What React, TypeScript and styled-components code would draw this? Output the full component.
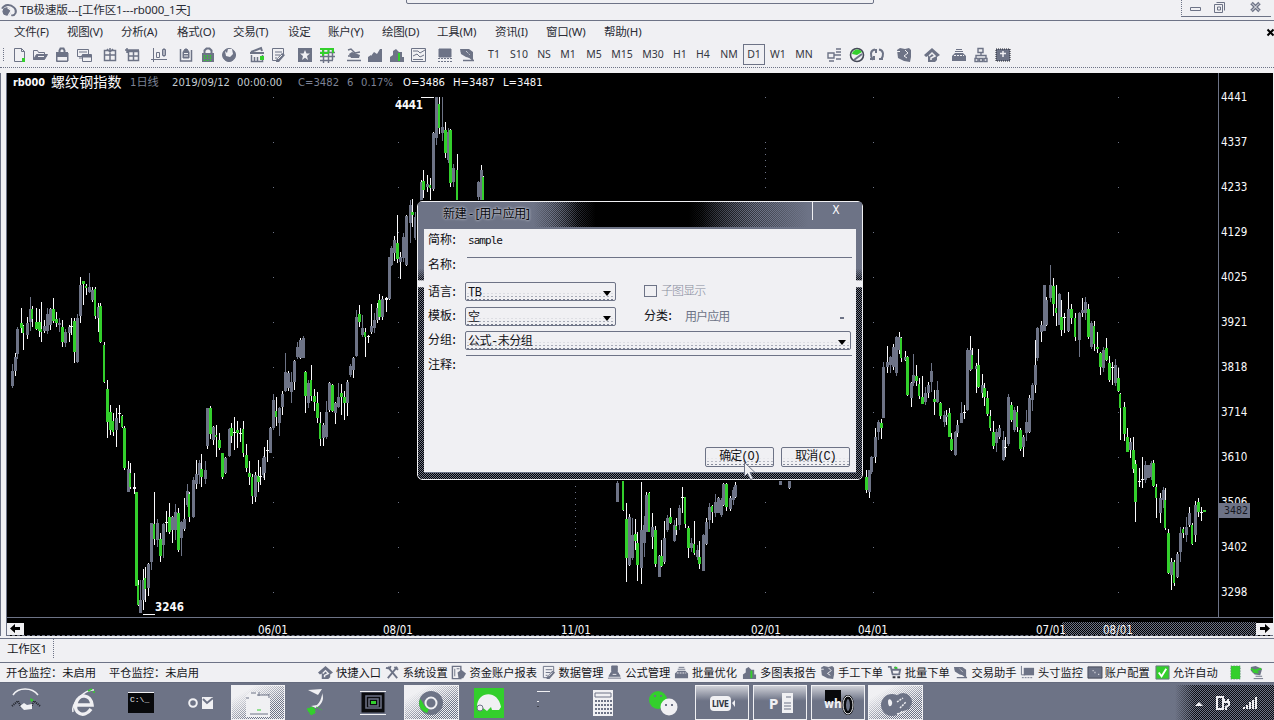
import React from "react";
import styled, { createGlobalStyle, css } from "styled-components";

const paper = "#f0f0f3";
const slate = "#6d7386";
const green = "#33cf2c";
const white = "#fafafc";
const ui = `"Noto Sans", "Noto Sans CJK SC", sans-serif`;
const cond = `"DejaVu Sans Condensed", "DejaVu Sans", "Noto Sans CJK SC", sans-serif`;
const checker = (c: string) =>
  `repeating-conic-gradient(${c} 0 25%, transparent 0 50%) 0 0 / 2px 2px`;

const Global = createGlobalStyle`
  *{box-sizing:border-box}
  body{margin:0;background:${paper};overflow:hidden}
`;
const Page = styled.div`
  position: relative; width: 1274px; height: 720px; display: flex; flex-direction: column;
  background: ${paper}; color: #16171c; font: 12px/16px ${ui}; white-space: nowrap; overflow: hidden;
`;

/* ---------- title and menu ---------- */
const TitleBar = styled.header`
  height: 21px; flex: none; display: flex; align-items: center; border-bottom: 1px solid ${slate};
  padding-left: 1px; gap: 4px;
`;
const TitleText = styled.span`font-size: 11.5px; letter-spacing: -0.14px; flex: 1; color: #2a2c35; padding-bottom: 1px;`;
const TitleNotch = styled.div`
  position: absolute; left: 406px; top: -3px; width: 468px; height: 7px;
  border: 1px solid ${slate}; border-radius: 2px;
`;
const WindowButtons = styled.div`
  width: 90px; height: 17px; align-self: flex-start; display: flex; align-items: center;
  border-bottom: 1px solid ${slate}; border-left: 1px dotted ${slate}; margin-right: 3px;
`;
const MenuBar = styled.nav`height: 22px; flex: none; display: flex; align-items: center; padding-left: 14px; color: #2a2c35;`;
const MenuItem = styled.span<{ $w: number }>`width: ${(p) => p.$w}px; font-size: 11.5px; letter-spacing: -0.2px; flex: none;`;

/* ---------- toolbar ---------- */
const ToolBar = styled.div`
  height: 25px; flex: none; display: flex; align-items: center; padding: 0 0 1px 3px;
  border-bottom: 1px dotted ${slate};
`;
const Grip = styled.i`width: 1px; height: 13px; border-left: 1px dotted ${slate};`;
const Tool = styled.span<{ $gap: number; $w: number; $on?: boolean }>`
  margin-left: ${(p) => p.$gap}px; width: ${(p) => p.$w}px; height: 21px; flex: none;
  display: flex; align-items: center; justify-content: center;
  font: 10.5px/19px ${ui}; color: #343742;
  ${(p) => p.$on && css`border: 1px solid ${slate};`}
`;

const iconArt: Record<string, React.ReactNode> = {
  doc: <><path d="M3.5 1.5h7l3 3v10h-10z" /><path d="M10.500 1.500v3h3" /><path d="M11 11h3v4h-3z" fill={green} stroke="none" /></>,
  folder: <><path d="M1.500 12.500v-9h4l1 2h6v2" /><path d="M1.500 12.500l3-5h11l-3 5z" fill={slate} /><path d="M6 9.500h6" stroke={paper} /></>,
  lock: <><path d="M5.500 6V3.500l1-2h3l1 2V6" strokeWidth="2" /><path d="M3 6h11v8H3z" fill={paper} /><path d="M2.500 5v9.500h11V5" /><path d="M3 5h11v5H3z" fill={slate} stroke="none" /></>,
  windows: <><path d="M1.500 2.500h11v7h-11z" /><path d="M6.500 7.500h9v7h-9z" fill={paper} /><path d="M6 8h9v2H6zM3 11h4M3 5h8" fill={slate} /></>,
  table: <><path d="M2.500 3.500h11v10h-11zM8 1v13M2.500 8h11M5 2l3 3 3-3" strokeWidth="1.500" /></>,
  tableT: <><path d="M4.500 4.500h10v9h-10zM9.500 3v11M4.500 9h10M1 3h14M3 1v5" strokeWidth="1.500" /></>,
  candles: <><path d="M2.500 1v14M0 12.500h16" /><path d="M5.500 5.500h3v5h-3zM11.500 2.500h3v6h-3zM13 1v9" /></>,
  bag: <><path d="M2.500 2v12h11V3" strokeWidth="1.500" /><path d="M5 11V5l2-3h2l2 3v6z" fill={slate} /><path d="M6 6.500h4M6 9h4" stroke={paper} /></>,
  report: <><path d="M1.500 1.500h9v13h-9z" strokeWidth="1.500" /><path d="M4 4v8M6 4h3" /><path d="M7 8l4-3 5 4-3 5H8z" fill={slate} stroke="none" /></>,
  greenLock: <><path d="M4.500 6V3.500l2-2h3l2 2V6" strokeWidth="2" /><path d="M2 6h12v9H2z" fill={slate} stroke="none" /><path d="M4.500 8v6M7.500 8v6M10.500 8v6" stroke={green} strokeWidth="1.500" strokeDasharray="1.500 1" /></>,
  ring: <><path d="M8 1.500a6.500 6.500 0 1 0 .1 0z" fill={slate} /><path d="M4 4l2 2 1-4 4 0 1 5-3 3-4-1z" fill={paper} stroke="none" /></>,
  clap: <><path d="M2 5l10-4 1 3M1 6h14" strokeWidth="2" /><path d="M2.500 8v6.500h11V8M5.500 10v5M8.500 10v5" strokeWidth="1.500" /><path d="M11 9h4v4h-4z" fill={green} stroke="none" /></>,
  note: <><path d="M2.500 1.500h11v6M2.500 1.500v12h6M5 5h7M5 8h5M5 11h2" /><path d="M6 13l6-7 3 2-6 7H6z" fill={slate} stroke="none" /><path d="M8 12l4-4" stroke={paper} /></>,
  star: <><path d="M1 1h14v14H1z" fill={slate} stroke="none" /><path d="M8 3l1.500 3.500H13L10 9l1 4-3-2.200L5 13l1-4-3-2.500h3.500z" fill={paper} stroke="none" /></>,
  grid: <><path d="M1 5.500h15M1 9.500h15M1 13.500h13M4.500 2v14M9.500 2v14M13.500 2v11" strokeWidth="1.500" /><path d="M4 1v8M9.500 1v5M14 1v5M1 2h14M1 6h9" stroke={green} strokeWidth="2" /></>,
  hand: <><path d="M2 3l3-1 4 4 5-1M2 9h11M1 13.500h14" strokeWidth="1.500" /><path d="M3 7l3-2 8 3-1 3H5z" fill={slate} stroke="none" /></>,
  bars: <path d="M1 15V10l3-2v1l3-4 3 2 3-5h2v13z" fill={slate} stroke="none" />,
  barsG: <><path d="M1 15v-5l3-2V4l3-2 3 3h3v5h2v5z" fill={slate} stroke="none" /><path d="M9 6h2v8H9z" fill={green} stroke="none" /></>,
  sheet: <><path d="M1.500 1.500h14v13h-14z" /><path d="M3 4h5l2 2 5-3M3 9l4-2 3 3 4-2M3 12.500h10" /></>,
  screen: <><path d="M2 2h12v8H2z" fill={slate} /><path d="M1 11.500h14M1 14.500h14" strokeDasharray="2 1" /></>,
  chartBox: <><path d="M1 2h9l4 3v8l-3-2-4-1-5-3z" fill={slate} stroke="none" /><path d="M2 4l12 9M4 13.500h11" strokeWidth="1.500" /><path d="M7 4l4 4" stroke={paper} strokeDasharray="1 1" /></>,
  boxes: <><path d="M2 6h6v5H2zM3 14h5M10 2h5M10 5h5M10 8h5M10 12h5M8 8h3" strokeWidth="1.400" /></>,
  gauge: <><circle cx="8" cy="8" r="6.500" strokeWidth="1.600" stroke="#454957" /><path d="M3 7c1-5 7-6 10-2l-5 3z" fill={green} stroke="none" /><path d="M5 13l8-6" strokeWidth="2" /></>,
  cycle: <path d="M6 2.500C1 3 1 9 4 13M10 2.500c5 1 5 6 2 10M1 12h4V9M7 2v4M10 12h4" strokeWidth="2" />,
  db: <><path d="M1 3l3-2 5 1 4-1 2 2v7l-1 5-6-1-6-3z" fill={slate} stroke="none" /><path d="M9 3l3 3-4 3 3 2M1 4.500h3" stroke={paper} /></>,
  home: <><path d="M8 1l8 7-3 2v3l-2 2H4V9l-2 1-2-2z" fill={slate} stroke="none" /><path d="M5 9l3-3 3 3-4 2v2" stroke={paper} strokeWidth="1.500" /></>,
  car: <><path d="M1 14V9l3-3h8l3 3v5z" fill={slate} stroke="none" /><path d="M4 4.500h8M5 2.500h6" /><path d="M3 8.500h10" stroke={paper} strokeDasharray="2 1" /></>,
  tree: <><path d="M5 1.500h5v4H5zM8 6v3M3 11V8.500h10V11M2 11.500h3v3H2zM6.500 11.500h3v3h-3zM11 11.500h3v3h-3z" strokeWidth="1.400" /></>,
  shot: <><path d="M1 2h14v12H1z" fill={slate} stroke="#20222a" strokeDasharray="1 1" /><path d="M8 4v6M5 6.500h6" stroke={paper} strokeWidth="1.500" /></>,
  account: <><path d="M1 2h15v12H1z" fill={slate} stroke="#454957" /><path d="M6 6h1M8 8h1M12 10h1" stroke={paper} strokeWidth="1.500" /></>,
  tools: <path d="M3 2l10 12M13 2L3 14M1 3l4 1 1-3M10 2l4 3" strokeWidth="2" />,
  cart: <><path d="M1 2h3l2 8h7l1-5H5M8 2l3 3" strokeWidth="2" /><path d="M6 13h3M11 13h3" strokeWidth="2" stroke="#30333d" /><path d="M8 2h3v2H8z" fill={green} stroke="none" /></>,
  lab: <><path d="M5 1h6v6l3 5H2l3-5zM1 14h14" fill={slate} /><path d="M6 10h4" stroke={paper} /></>,
  monitor: <><path d="M1.500 1v9.500h4" /><path d="M4 3h11v8H4z" fill={slate} stroke="none" /><path d="M2 13.500h11" strokeDasharray="2 1" /></>,
  check: <><path d="M1 1h14v14H1z" fill={green} stroke={slate} /><path d="M4 8l3 4 5-8" stroke="#fff" strokeWidth="2" /></>,
  block: <path d="M3 1h10v14H3z" fill={green} stroke={slate} strokeDasharray="1 2" />,
  net: <><path d="M2 2l5-1 7 3-2 7-6-1-4-4z" fill={slate} stroke="none" /><path d="M2 4l4 2 7-2M4 7l6 1" stroke={green} strokeWidth="2" /><path d="M5 14.500h10M7 12h7" /></>,
  orbit: <><path d="M1 6c3-5 9-5 13-1s1 9-3 8" strokeWidth="2" /><circle cx="6" cy="9" r="4" fill={slate} /><path d="M7 5l4 3-3 5" stroke={paper} strokeWidth="1.500" /></>,
};
const Svg = styled.svg`display: block; flex: none; overflow: visible;`;
const MenuClose = styled(Svg)`margin-left: auto;`;
const Icon = ({ name, size = 15 }: { name: string; size?: number }) => (
  <Svg width={size} height={size} viewBox="0 0 16 16" fill="none" stroke={slate}>{iconArt[name]}</Svg>
);

const menus: [string, number][] = [
  ["文件(F)", 53], ["视图(V)", 54], ["分析(A)", 56], ["格式(O)", 56], ["交易(T)", 55], ["设定", 40],
  ["账户(Y)", 54], ["绘图(D)", 55], ["工具(M)", 58], ["资讯(I)", 51], ["窗口(W)", 58], ["帮助(H)", 50],
];
/* tool label or icon name, centre along the bar */
const tools: [string, number][] = [
  ["doc", 19], ["folder", 40], ["lock", 62], ["windows", 84], ["table", 110], ["tableT", 132], ["candles", 159],
  ["bag", 186], ["greenLock", 208], ["ring", 229], ["clap", 257], ["note", 278], ["star", 305], ["grid", 327],
  ["hand", 354], ["bars", 375], ["barsG", 397], ["sheet", 418], ["screen", 445], ["chartBox", 467],
  ["T1", 494], ["S10", 519], ["NS", 544], ["M1", 568], ["M5", 594], ["M15", 622], ["M30", 653], ["H1", 680],
  ["H4", 703], ["NM", 729], ["D1", 754], ["W1", 778], ["MN", 804],
  ["boxes", 834], ["gauge", 857], ["cycle", 877], ["db", 904], ["home", 932], ["car", 959], ["tree", 981], ["shot", 1003],
];
const toolRow = tools.map(([name, c], i) => {
  const w = (n: string) => (iconArt[n] ? 16 : 22);
  const prevEnd = i ? tools[i - 1][1] + w(tools[i - 1][0]) / 2 : 4;
  return { name, w: w(name), gap: c - w(name) / 2 - prevEnd };
});

/* ---------- chart ---------- */
const ChartFrame = styled.main`
  height: 563px; flex: none; margin-top: 5px; margin-right: 1px; display: grid;
  grid-template-columns: 1211px 1fr; grid-template-rows: 545px 18px; background: #000;
  border-bottom: 1px dashed ${slate}; margin-left: 7px; color: ${white};
  box-shadow: -1px 0 ${slate}, -6px 0 ${paper}, -7px 0 ${slate};
`;
const Plot = styled.section`border-bottom: 1px solid ${slate}; position: relative; overflow: hidden;`;
const Quote = styled.div`
  position: absolute; left: 6px; top: 1px; height: 17px; display: flex; align-items: center; font: 11.200px/17px ${cond};
`;
const QuotePart = styled.span<{ $w: number; $dim?: boolean; $big?: boolean; $strong?: boolean; $tint?: boolean }>`
  width: ${(p) => p.$w}px; color: ${(p) => (p.$dim ? "#7d8395" : p.$tint ? "#c3cbd0" : white)};
  ${(p) => p.$big && css`font-size: 14px; letter-spacing: 0.100px;`}
  ${(p) => p.$strong && css`font-weight: 600; font-size: 10.800px;`}
`;
const PriceAxis = styled.aside`
  border-left: 1px solid ${slate}; border-bottom: 1px solid ${slate}; position: relative;
  display: flex; flex-direction: column; padding: 1.500px 0 0 2px; font: 11.500px/45px ${cond};
`;
const PriceTick = styled.span`height: 45px; flex: none;`;
const LastPrice = styled.span`
  position: absolute; left: 0; top: 430px; width: 31px; height: 15px; background: ${slate};
  color: #15171d; font: 10.500px/15px ${cond}; padding-left: 5px;
`;
const DateAxis = styled.footer`
  grid-column: 1 / 3; display: flex; align-items: center; justify-content: space-between; position: relative; padding-top: 3px;
`;
const Scroll = styled.i`
  width: 17px; height: 12px; background: ${paper}; display: flex; align-items: center; justify-content: center;
`;
const Thumb = styled.i`flex: none; width: 194px; height: 13px; margin-left: auto; background: ${checker(slate)};`;
const DateTicks = styled.div`position: absolute; left: 251px; top: 4px; display: flex; font: 11.500px/16px ${cond};`;
const DateTick = styled.span<{ $w: number }>`width: ${(p) => p.$w}px;`;

/* candle: x, high, low, body top, body bottom, tone (thirds of a pixel; 0 rising, 1 falling, 2 doji) */
type Candle = [number, number, number, number, number, 0 | 1 | 2];
const segments: { x: number; y: number; candles: Candle[] }[] = [
  { x: 0, y: 240, candles: [
    [37,372,445,393,437,0],[46,340,407,352,393,0],[53,262,356,268,342,0],[63,204,278,250,265,1],[71,255,330,257,280,1],[82,232,298,250,285,0],[91,170,272,207,247,0],[98,198,262,207,238,1],[109,205,270,245,268,1],[117,208,290,245,272,1],[125,187,305,268,276,1],[133,240,280,258,272,0],[142,205,282,222,272,0],[152,205,270,207,255,0],[159,175,250,207,243,1],[168,215,262,238,250,1],[177,235,275,250,256,0],[188,240,322,262,305,1],[197,268,320,275,310,0],[208,255,305,262,280,0],[214,235,285,258,262,2],[223,235,370,243,336,1],[232,222,370,235,365,0],[240,112,248,135,227,0],[249,122,195,122,132,1],[258,132,165,137,145,1],[268,100,160,140,155,0],[277,140,185,150,180,0],[286,142,238,148,228,1],[294,190,275,200,235,0],[302,190,308,198,305,1],[312,307,428,315,427,1],[321,420,595,448,547,1],[330,495,585,515,570,1],[339,520,587,542,575,1],[348,505,620,535,570,0],[357,495,548,518,522,2],[366,525,565,528,562,1],[374,558,690,565,685,1],[384,662,757,688,755,0],[391,668,748,698,742,1],[403,698,762,740,746,2],[409,756,1038,756,1038,1],[415,1020,1098,1035,1095,1],[420,1020,1120,1080,1120,0],[429,988,1110,1020,1080,0],[436,980,1085,1015,1048,1],[446,970,1068,972,1045,0],[455,850,990,850,965,0],[463,757,915,852,898,1],[473,838,920,850,900,0],[480,878,965,897,948,1],[490,848,953,852,915,0],[499,812,876,845,850,2],[507,790,882,832,876,1],[517,828,908,832,870,0],[526,793,900,815,870,0],[534,805,935,820,930,1],[543,842,948,845,895,0],[552,775,872,838,868,0],[561,733,800,752,795,0],[569,757,845,763,832,1],[579,710,835,720,832,0],[588,660,748,702,732,0],[597,660,732,670,705,0],[604,643,740,687,712,1],[615,663,732,690,718,0],[622,504,628,504,617,0],[632,498,598,503,582,1],[641,558,615,560,600,0],[650,556,652,585,590,1],[658,580,630,600,623,1],[668,640,718,640,710,1],[677,652,702,655,700,0],[687,563,652,568,648,0],[693,550,610,563,587,1],[703,530,630,577,580,2],[712,543,625,570,580,1],[721,565,605,578,582,2],[729,543,652,568,638,1],[738,612,697,645,685,1],[747,662,735,700,712,1],[757,703,793,712,768,1],[765,695,785,705,770,0],[774,660,755,708,726,1],[782,680,735,707,712,2],[789,648,713,653,705,0],[793,620,720,650,700,0],[802,600,665,630,633,2],[811,562,640,565,638,0] ] },
  { x: 240, y: 90, candles: [
    [100,912,1020,930,1015,0],[108,922,1008,962,980,1],[118,950,1038,955,1000,0],[127,903,975,912,950,0],[136,790,905,845,902,0],[144,843,902,850,895,0],[153,845,938,875,905,0],[162,810,900,812,875,0],[172,757,808,770,800,0],[181,745,808,750,803,0],[189,738,805,745,805,0],[195,842,968,845,918,1],[205,870,955,880,940,0],[214,826,932,870,917,1],[223,898,962,917,935,1],[232,905,998,940,985,1],[240,965,1067,1000,1048,1],[250,998,1068,1005,1045,0],[259,933,1047,965,1040,0],[268,875,965,880,960,0],[277,882,965,885,962,1],[287,935,1002,940,968,0],[295,880,955,922,952,0],[303,883,975,910,922,1],[313,903,990,922,938,1],[321,870,978,875,940,0],[330,822,860,828,855,0],[339,800,865,805,840,0],[349,660,802,680,798,0],[357,645,712,672,695,1],[366,675,740,715,735,0],[375,713,800,725,740,1],[386,735,760,738,742,2],[395,643,732,708,725,0],[403,668,730,690,715,0],[411,638,700,655,690,0],[419,613,690,630,682,1],[428,618,690,628,680,0],[438,620,665,625,630,2],[447,500,630,500,628,0],[455,468,528,475,525,0],[464,437,512,450,490,0],[472,375,520,460,508,1],[481,487,568,500,515,0],[490,430,515,440,505,0],[500,375,527,377,525,0],[510,330,460,345,400,0],[517,328,410,365,375,1],[526,365,450,380,445,0],[543,270,340,275,340,0],[550,240,325,272,300,1],[562,255,305,282,290,0],[571,265,332,284,295,1],[580,125,303,130,298,0],[588,20,165,22,145,0],[597,22,132,42,113,1],[607,20,153,112,130,0],[615,95,205,120,190,1],[624,115,220,125,210,0],[632,117,290,120,280,1],[641,222,290,235,275,0],[651,192,335,240,335,1],[715,272,335,275,320,0],[723,225,335,240,335,0],[729,258,335,260,330,1] ] },
  { x: 600, y: 470, candles: [
    [53,20,97,40,95,0],[69,20,122,30,120,1],[78,98,335,148,265,1],[87,132,287,140,285,0],[96,145,270,195,265,0],[105,148,240,192,212,1],[113,187,333,220,285,1],[123,35,342,180,295,0],[132,138,262,165,220,0],[140,67,187,75,185,0],[149,65,187,68,185,1],[157,128,238,170,200,0],[167,168,292,180,282,1],[177,255,320,257,320,0],[183,210,290,258,288,1],[193,153,282,205,275,0],[202,135,187,145,180,0],[211,115,162,142,160,1],[222,150,215,165,212,0],[229,145,195,168,180,1],[238,105,180,115,165,0],[247,52,130,80,84,2],[257,80,175,82,162,1],[265,168,265,175,233,1],[274,203,245,220,235,0],[283,153,255,222,250,1],[292,225,270,240,262,0],[299,212,297,262,282,1],[309,192,302,194,302,0],[318,145,225,155,222,0],[327,98,177,110,150,0],[336,105,158,108,125,1],[346,72,140,95,130,0],[354,82,130,85,130,0],[363,85,142,90,135,0],[371,40,108,42,105,0],[380,40,122,42,110,1],[390,78,122,85,118,0],[399,52,105,60,90,0],[406,37,85,45,82,0],[541,33,45,33,45,0],[568,33,57,33,55,0],[798,0,68,20,60,1],[809,0,83,0,65,0] ] },
  { x: 850, y: 250, candles: [
    [65,618,672,620,665,0],[76,535,638,560,620,0],[85,510,570,515,545,0],[93,508,567,520,533,1],[101,337,503,350,503,0],[112,288,368,335,350,0],[121,318,368,322,345,0],[129,282,360,290,350,0],[138,258,377,262,370,0],[147,247,312,260,300,0],[155,262,335,265,325,1],[166,302,332,320,330,0],[172,318,438,320,435,1],[183,395,470,398,445,0],[191,313,408,375,400,0],[199,345,407,377,393,1],[209,385,447,402,437,1],[218,378,462,440,462,1],[227,410,465,430,455,0],[236,397,445,405,430,0],[243,338,425,362,395,0],[253,420,495,448,456,1],[262,392,460,420,455,0],[270,455,508,460,497,1],[282,483,530,495,515,0],[290,480,525,495,500,0],[298,475,560,490,560,1],[305,548,603,568,600,1],[315,542,617,545,615,0],[323,510,560,525,550,0],[334,457,520,488,518,0],[343,465,508,485,488,2],[351,295,482,300,480,0],[360,258,362,300,360,0],[367,293,358,315,357,1],[378,340,430,348,358,0],[386,297,415,345,412,1],[397,372,443,405,430,0],[404,400,468,415,440,1],[411,422,498,445,492,1],[421,480,543,498,533,1],[430,512,597,545,588,1],[440,537,605,545,580,0],[449,525,568,535,560,0],[459,543,632,570,630,0],[467,560,622,590,594,2],[475,432,588,440,582,0],[484,455,515,465,510,1],[494,470,545,480,540,0],[501,467,545,485,530,1],[510,533,602,540,598,1],[520,555,620,560,590,0],[529,480,572,515,550,0],[538,435,548,445,545,0],[548,400,483,405,450,0],[556,270,430,345,405,0],[563,230,333,235,325,0],[573,213,275,225,245,0],[582,105,243,105,243,0],[590,140,228,150,225,0],[600,45,155,105,145,0] ] },
  { x: 1020, y: 250, candles: [
    [99,85,197,108,162,1],[108,105,227,175,190,1],[117,130,225,132,225,0],[125,150,258,202,240,1],[134,190,248,200,204,2],[145,125,245,178,242,0],[153,163,222,178,203,1],[165,190,272,205,262,1],[178,187,320,190,270,0],[187,145,200,180,190,0],[197,140,210,155,190,0],[206,162,267,178,260,1],[214,212,297,220,290,0],[222,213,302,227,283,1],[232,245,310,290,297,1],[241,305,375,308,350,1],[250,290,365,300,355,0],[259,263,333,295,330,1],[267,318,395,338,390,1],[277,335,405,350,354,2],[287,328,408,345,400,0],[294,355,425,385,423,1],[302,430,570,432,473,1],[312,455,572,472,552,1],[321,533,607,560,605,1],[330,565,625,575,600,0],[339,560,668,600,658,1],[347,630,815,642,755,1],[357,655,710,693,696,2],[366,620,715,687,690,2],[375,633,700,645,690,0],[384,645,685,645,685,0],[393,633,690,640,680,0],[401,630,710,640,708,1],[410,702,805,712,745,1],[420,730,820,745,790,0],[430,712,775,720,750,0],[436,715,840,750,835,1],[445,838,972,850,970,1],[455,925,1020,935,975,0],[463,930,1008,935,998,1],[472,905,985,912,980,0],[482,832,935,850,905,0],[489,830,865,837,850,1],[500,800,875,830,855,0],[508,770,830,790,826,0],[517,820,885,825,882,1],[527,752,875,765,855,0],[535,745,800,757,787,1],[544,770,812,785,788,2],[553,780,787,780,787,1] ] },
];
const tone = [slate, green, white];
const Candles = () => (
  <Svg width="1211" height="545" viewBox="7 73 1211 545" shapeRendering="crispEdges">
    {[97, 142, 187, 232, 277, 322, 367, 412, 457, 502, 547, 592].map((y) =>
      [273, 398, 765, 873, 1118].map((x) => <rect key={`${x}-${y}`} x={x} y={y} width="1" height="1" fill={slate} />))}
    <path d="M765.5 148v36M575.5 480v68" stroke={slate} strokeDasharray="1 5" />
    {segments.map((s) => s.candles.map(([x, hi, lo, a, b, t], i) => {
      const cx = Math.floor(s.x + x / 3);
      const y = (v: number) => Math.round(s.y + v / 3);
      const bodyW = t === 1 && i % 3 === 1 ? 2 : 3;
      const slateWick = t === 0 && i % 2 === 0;
      return (
        <g key={`${s.x}-${i}`}>
          <rect x={cx} y={y(hi)} width="1" height={Math.max(1, y(lo) - y(hi))} fill={slateWick ? slate : white} />
          <rect x={cx - 1} y={y(a)} width={bodyW} height={Math.max(1, y(b) - y(a))} fill={tone[t]} />
        </g>
      );
    }))}
    <path d="M421 97.500h13M143 614.500h12" stroke={white} />
    <g fill={white} fontFamily="DejaVu Sans Condensed" fontWeight="700" fontSize="11.500">
      <text x="395" y="109" textLength="28">4441</text>
      <text x="155" y="611" textLength="29">3246</text>
    </g>
  </Svg>
);

/* ---------- tabs, status bar ---------- */
const SheetTabs = styled.div`
  height: 25px; flex: none; margin-top: 2px; border-top: 1px solid ${slate}; border-bottom: 1px solid ${slate}; display: flex;
`;
const SheetTab = styled.span`width: 54px; height: 19px; padding-left: 7px; font-size: 11.500px; line-height: 20px; border-right: 1px dotted ${slate}; letter-spacing: -0.300px;`;
const StatusBar = styled.div`height: 19px; flex: none; display: flex; align-items: center; padding-left: 6px; font-size: 11.250px;`;
const StatusText = styled.span<{ $w: number }>`width: ${(p) => p.$w}px; flex: none;`;
const StatusLink = styled.span<{ $gap?: number }>`
  display: flex; align-items: center; gap: 3px; flex: none; margin-right: ${(p) => p.$gap ?? 3.700}px;
`;
const links: [string, string, number?][] = [
  ["home", "快捷入口"], ["tools", "系统设置"], ["report", "资金账户报表"], ["note", "数据管理"], ["lab", "公式管理"],
  ["car", "批量优化", 5], ["barsG", "多图表报告"], ["db", "手工下单"], ["cart", "批量下单"], ["chartBox", "交易助手"],
  ["monitor", "头寸监控"], ["account", "账户配置", 5], ["check", "允许自动", 10],
];

/* ---------- taskbar ---------- */
const TaskBar = styled.footer`height: 38px; flex: none; display: flex; background: ${slate}; padding: 2px 0 0; border-top: 1px solid #646a7d;`;
const Task = styled.span<{ $w: number; $lit?: 1 | 2; $ml?: number }>`
  width: ${(p) => p.$w}px; margin-left: ${(p) => p.$ml ?? 0}px; height: 35px; flex: none; display: flex;
  align-items: center; justify-content: center; position: relative;
  ${(p) => p.$lit && css`
    border: 1px solid ${paper};
    background: ${p.$lit === 2
      ? `linear-gradient(150deg, ${paper} 20%, transparent 70%), ${checker(paper)}`
      : `linear-gradient(180deg, rgba(240,240,243,.75), transparent 45%)`};
  `}
`;
const Tray = styled.span`
  margin-left: auto; width: 99px; height: 36px; display: flex; align-items: center; justify-content: flex-end;
  gap: 13px; padding-right: 16px; background: linear-gradient(90deg, ${slate}, transparent 20%), ${checker("#0b0c10")};
`;
const TaskArt = ({ children, w = 32 }: { children: React.ReactNode; w?: number }) => (
  <Svg width={w} height="32" viewBox={`0 0 ${w} 32`} fill="none">{children}</Svg>
);

/* ---------- dialog ---------- */
const Dialog = styled.div`
  position: absolute; left: 417px; top: 201px; width: 446px; height: 279px; border-radius: 5px;
  border: 1px solid ${paper}; padding: 0 6px 6px; display: flex; flex-direction: column; outline: 1px solid #000;
  background: linear-gradient(${slate} 24%, transparent 28%, ${paper} 28.500%, ${paper} 30.500%, transparent 31%),
    ${checker("#000")}, ${slate};
  background-clip: padding-box;
`;
const DialogTitle = styled.div`
  height: 27px; flex: none; display: flex; margin: 0 -6px; padding-left: 25px; border-bottom: 2px solid ${slate};
  background: linear-gradient(90deg, ${slate} 26%, transparent 36%, transparent 64%, ${slate} 88%),
    linear-gradient(90deg, transparent 30%, #000 40%, #000 61%, transparent 76%), ${checker("#000")}, ${slate};
  font: 12px/24px ${ui}; color: #08090c; border-radius: 4px 4px 0 0;
`;
const DialogName = styled.span`
  height: 18px; margin-top: 3px; line-height: 18px; padding-right: 4px; letter-spacing: -0.300px;
  text-shadow: 0 0 3px #c9ccd6, 0 0 2px #c9ccd6;
`;
const DialogClose = styled.span`
  margin-left: auto; width: 50px; height: 18px; background: ${slate}; border-left: 1px solid ${paper};
  display: flex; align-items: center; justify-content: center; color: ${white}; font: 12px/14px ${cond}; padding: 0 3px 2px 0;
`;
const mono = `"Liberation Mono", "Noto Sans CJK SC", monospace`;
const Form = styled.div`
  flex: 1; background: ${paper}; display: grid; grid-template-rows: 29px 24px 25px 24px 24px 18px 1fr; padding: 0 4px 0 4px;
  font: 12px/20px ${mono}; color: #101116; border-bottom: 1px solid ${slate};
`;
const Field = styled.div`display: flex; align-items: flex-start;`;
const Label = styled.label<{ $ml?: number; $drop?: number }>`
  width: 37px; height: 18px; flex: none; font-size: 12px; line-height: 19px;
  margin: ${(p) => p.$drop ?? 1}px 0 0 ${(p) => p.$ml ?? 0}px;
`;
const Colon = styled.span`margin-left: -1.500px;`;
const Line = styled.span`
  flex: 1; height: 29px; margin-left: 2px; padding-left: 1px; border-bottom: 1px solid ${slate};
  font: 11px/24px "DejaVu Sans Mono", monospace; letter-spacing: -0.950px;
`;
const Select = styled.span<{ $w?: number; $ghost?: boolean }>`
  width: ${(p) => p.$w ?? 151}px; height: 19px; flex: none; display: flex; align-items: center; justify-content: space-between;
  padding: 3px 4px 0 2px; line-height: 17px; border: 1px solid ${slate}; border-radius: 2px; letter-spacing: -0.500px;
  background: linear-gradient(${paper} 55%, transparent), radial-gradient(${slate} 0.600px, transparent 0.800px) 0 0 / 4px 3px;
  ${(p) => p.$ghost && css`border-color: transparent; color: ${slate}; background: none; padding-left: 3px; letter-spacing: -0.900px;`}
`;
const Arrow = styled.i`border: 4px solid transparent; border-top: 5px solid #000; border-bottom: 0;`;
const FaintArrow = styled.i`width: 4px; height: 2px; background: ${slate};`;
const Check = styled.i`width: 13px; height: 12px; border: 1px solid ${slate}; margin: 3px 4px 0 28px;`;
const Faint = styled.span`color: #868b9b; font-weight: 300; letter-spacing: -0.900px;`;
const Notes = styled.div`border-top: 1px solid ${slate}; flex: 1; height: 1px; margin-left: 1px;`;
const Actions = styled.div`display: flex; justify-content: flex-end; align-items: flex-end; gap: 7px; padding: 0 2px 5px 0;`;
const Button = styled.button`
  width: 69px; height: 20px; border: 1px solid ${slate}; border-radius: 2px; color: #101116; padding: 1px 0 0;
  font: 12px/17px ${mono}; letter-spacing: -1px; white-space: nowrap;
  background: linear-gradient(${paper} 55%, transparent), radial-gradient(${slate} 0.600px, transparent 0.800px) 0 0 / 4px 3px;
`;
const Cursor = styled.svg`position: absolute; left: 744px; top: 462px;`;
const Caption = ({ text, ml, drop }: { text: string; ml?: number; drop?: number }) => (
  <Label $ml={ml} $drop={drop}>{text}<Colon>:</Colon></Label>
);

export default function App() {
  return (
    <Page>
      <Global />
      <TitleBar>
        <Icon name="orbit" />
        <TitleText>TB极速版---[工作区1---rb000_1天]</TitleText>
        <WindowButtons>
          <Svg width="88" height="16" viewBox="0 0 88 16" fill="none" stroke={slate}>
            <path d="M8.500 7.500h10v3h-10zM32.500 4.500h8v8h-8zM34.500 2.500h8v8M35.500 7h3v3h-3z" />
            <path d="M69.500 3l8 8M77.500 3l-8 8" strokeWidth="3.500" /><path d="M70 3.500l7 7M77 3.500l-7 7" stroke={paper} />
          </Svg>
        </WindowButtons>
        <TitleNotch />
      </TitleBar>
      <MenuBar>
        {menus.map(([m, w]) => <MenuItem key={m} $w={w}>{m}</MenuItem>)}
        <MenuClose width="7" height="7" viewBox="0 0 7 7"><path d="M.5.500l6 6M6.500.500l-6 6" stroke="#000" strokeWidth="2" /></MenuClose>
      </MenuBar>
      <ToolBar>
        <Grip />
        {toolRow.map((t) => (
          <Tool key={t.name} $gap={t.gap} $w={t.w} $on={t.name === "D1"}>
            {iconArt[t.name] ? <Icon name={t.name} size={16} /> : t.name}
          </Tool>
        ))}
      </ToolBar>

      <ChartFrame>
        <Plot>
          <Candles />
          <Quote>
            <QuotePart $w={38} $strong>rb000</QuotePart>
            <QuotePart $w={79} $big>螺纹钢指数</QuotePart>
            <QuotePart $w={42} $dim>1日线</QuotePart>
            <QuotePart $w={65} $tint>2019/09/12</QuotePart>
            <QuotePart $w={61} $tint>00:00:00</QuotePart>
            <QuotePart $w={49} $dim>C=3482</QuotePart>
            <QuotePart $w={14} $dim>6</QuotePart>
            <QuotePart $w={42} $dim>0.17%</QuotePart>
            <QuotePart $w={50}>O=3486</QuotePart>
            <QuotePart $w={50}>H=3487</QuotePart>
            <QuotePart $w={50}>L=3481</QuotePart>
          </Quote>
        </Plot>
        <PriceAxis>
          {[4441, 4337, 4233, 4129, 4025, 3921, 3818, 3714, 3610, 3506, 3402, 3298].map((p) => <PriceTick key={p}>{p}</PriceTick>)}
          <LastPrice>3482</LastPrice>
        </PriceAxis>
        <DateAxis>
          <Scroll><Svg width="11" height="9" viewBox="0 0 11 9"><path d="M0 4.500L5 0v3h5v3H5v3z" fill="#000" /></Svg></Scroll>
          <Thumb />
          <Scroll><Svg width="11" height="9" viewBox="0 0 11 9"><path d="M11 4.500L6 0v3H1v3h5v3z" fill="#000" /></Svg></Scroll>
          <DateTicks>
            <DateTick $w={125}>06/01</DateTick><DateTick $w={178}>08/01</DateTick><DateTick $w={190}>11/01</DateTick>
            <DateTick $w={107}>02/01</DateTick><DateTick $w={178}>04/01</DateTick><DateTick $w={67}>07/01</DateTick><DateTick $w={31}>08/01</DateTick>
          </DateTicks>
        </DateAxis>
      </ChartFrame>

      <SheetTabs><SheetTab>工作区1</SheetTab></SheetTabs>
      <StatusBar>
        <StatusText $w={103}>开仓监控：未启用</StatusText>
        <StatusText $w={209}>平仓监控：未启用</StatusText>
        {links.map(([icon, text, gap]) => (
          <StatusLink key={text} $gap={gap}><Icon name={icon} />{text}</StatusLink>
        ))}
        <StatusLink $gap={6}><Icon name="block" /></StatusLink>
        <Icon name="net" />
      </StatusBar>

      <TaskBar>
        <Task $w={52}><TaskArt>
          <path d="M3 8C8 0 22 0 28 8" stroke={paper} strokeWidth="1.500" />
          <path d="M2 19l6-5 3 6M30 19l-6-5-3 6" stroke="#22242c" strokeWidth="2" strokeDasharray="1 1" />
          <path d="M10 19l4-3 3 2 5-1v5l-8 1z" fill={paper} /><path d="M20 11l4 2-3 2z" fill={green} />
        </TaskArt></Task>
        <Task $w={62}><TaskArt>
          <path d="M24 22c-7 10-18 4-15-6s15-9 16 2H10" stroke={paper} strokeWidth="3.500" />
          <path d="M6 25C4 16 18 2 27 3" stroke={paper} strokeWidth="1.500" /><path d="M21 4l4-2M26 5h2" stroke={green} strokeWidth="1.500" />
        </TaskArt></Task>
        <Task $w={54}><TaskArt>
          <path d="M3 6h26v20H3z" fill="#08090b" /><path d="M3 5.500h26" stroke={paper} />
          <text x="5" y="15" fill={paper} fontSize="8" fontFamily="Liberation Mono">C:\_</text>
        </TaskArt></Task>
        <Task $w={63}><TaskArt>
          <circle cx="9" cy="16" r="3.800" stroke={paper} strokeWidth="2" /><path d="M18 10h11v12H18z" fill={paper} />
          <path d="M19 12l4 4 6-5" stroke={slate} strokeWidth="2" />
        </TaskArt></Task>
        <Task $w={54} $lit={2}><TaskArt>
          <path d="M4 8l4-3h9l2 3h9v22H4z" fill={paper} /><path d="M9 6h5M15 8h12M17 5v4M27 7v4M4 11h3M8 27h18" stroke={slate} /><path d="M15 23h4" stroke={green} />
        </TaskArt></Task>
        <Task $w={56} $ml={1}><TaskArt>
          <path d="M10 3l10 5 4-6M24 6c3 7-1 12-6 15l-5-2 6-1c3-3 4-6 5-10z" fill={paper} />
          <path d="M9 22l5-2 3 2v4l-4 2zM18 20l6 3" fill={green} stroke={green} strokeDasharray="2 1" />
        </TaskArt></Task>
        <Task $w={62}><TaskArt>
          <path d="M4 5h24v21H4z" fill="#0a0b0e" stroke={slate} /><path d="M9 9h15v12H9zM12 12h9v7h-9z" stroke={slate} strokeWidth="1.500" />
          <path d="M3 4.500h26M3 27.500h26" stroke={paper} /><path d="M14 14h5v3h-5z" fill={green} />
        </TaskArt></Task>
        <Task $w={55} $lit={2}><TaskArt>
          <circle cx="15" cy="16" r="12" fill={slate} /><circle cx="15" cy="16" r="5.500" stroke={paper} strokeWidth="2" />
          <path d="M4 12c-2 6 0 12 7 14l2-4c-5-1-5-6-9-10z" fill={green} />
        </TaskArt></Task>
        <Task $w={60}><TaskArt>
          <path d="M1 1h30v30H1z" fill={green} /><path d="M4 20C4 4 25 2 28 20l-2 3h-7l-1-3-4 4-4-3z" fill={paper} />
          <circle cx="7" cy="21" r="3" fill={paper} stroke={slate} />
        </TaskArt></Task>
        <Task $w={54}><TaskArt><path d="M7 4.500h13M7 14.500h2" stroke={paper} /><path d="M8 19v1" stroke="#111" /></TaskArt></Task>
        <Task $w={60}><TaskArt>
          <path d="M6 3h20v26H6z" fill={paper} /><path d="M8 6h16v4H8z" stroke={slate} />
          <path d="M8 14h17M8 18h17M8 22h17M8 26h17" stroke={slate} strokeWidth="2" strokeDasharray="2 1" />
        </TaskArt></Task>
        <Task $w={58}><TaskArt>
          <circle cx="12" cy="13" r="9" fill={green} /><circle cx="23" cy="20" r="8.500" fill={paper} />
          <path d="M8 9h2M14 9h2M19 18h2M25 18h2" stroke={slate} strokeWidth="2" />
        </TaskArt></Task>
        <Task $w={54} $lit={1} $ml={4}><TaskArt>
          <rect x="4" y="9" width="21" height="15" rx="4" fill={paper} /><path d="M26 16l3-3v7z" fill={paper} />
          <text x="6" y="20" fill="#333743" fontSize="8" fontWeight="700" fontFamily="DejaVu Sans Condensed" textLength="17">LIVE</text>
        </TaskArt></Task>
        <Task $w={54} $lit={1} $ml={4}><TaskArt>
          <text x="5" y="22" fill={paper} fontSize="14" fontWeight="700" fontFamily="DejaVu Sans Condensed">P</text>
          <path d="M18 6h11v20H18z" fill={paper} /><path d="M20 16h7M20 19h7M20 22h7M22 10h5" stroke={slate} />
        </TaskArt></Task>
        <Task $w={54} $lit={1} $ml={4}><TaskArt>
          <path d="M3 3h16v12H3z" fill="#08090b" />
          <text x="2" y="21" fill={paper} fontSize="12" fontWeight="700" fontFamily="DejaVu Sans Condensed">wh</text>
          <ellipse cx="26" cy="18" rx="4" ry="8" stroke="#08090b" strokeWidth="4" /><ellipse cx="26" cy="18" rx="5" ry="9" stroke={paper} />
        </TaskArt></Task>
        <Task $w={55} $lit={2} $ml={3}><TaskArt>
          <circle cx="12" cy="18" r="11" fill={slate} /><circle cx="23" cy="15" r="9" fill={slate} />
          <path d="M8 14c1-4 5 0 4 3s-4 4-4-3z" fill={paper} />
          <path d="M17 15l6-4M20 21l6-6M17 27l9-3" stroke={paper} strokeWidth="1.500" strokeDasharray="2 1" />
        </TaskArt></Task>
        <Tray>
          <Svg width="8" height="5" viewBox="0 0 8 5"><path d="M0 5l4-4 4 4z" fill={paper} /></Svg>
          <Svg width="14" height="14" viewBox="0 0 14 14" fill="none"><path d="M1 1h6v12H1z" stroke={paper} strokeWidth="2" /><path d="M8 3v3M12 3v3M7 6h6v3l-3 2v3" stroke={paper} strokeWidth="2" /></Svg>
          <Svg width="15" height="12" viewBox="0 0 15 12"><path d="M0 10h2v2H0zM3 8h2v4H3zM6 5h2v7H6zM9 3h2v9H9zM12 0h2v12h-2z" fill={paper} /></Svg>
        </Tray>
      </TaskBar>

      <Dialog>
        <DialogTitle>
          <DialogName>新建 - [用户应用]</DialogName>
          <DialogClose>X</DialogClose>
        </DialogTitle>
        <Form>
          <Field><Caption text="简称" drop={3} /><Line>sample</Line></Field>
          <Field><Caption text="名称" drop={-1} /></Field>
          <Field>
            <Caption text="语言" drop={2} /><Select>TB<Arrow /></Select><Check /><Faint>子图显示</Faint>
          </Field>
          <Field>
            <Caption text="模板" /><Select>空<Arrow /></Select><Caption text="分类" ml={28} />
            <Select $w={168} $ghost>用户应用<FaintArrow /></Select>
          </Field>
          <Field><Caption text="分组" /><Select $w={386}>公式-未分组<Arrow /></Select></Field>
          <Field><Caption text="注释" drop={2} /><Notes /></Field>
          <Actions><Button>确定(O)</Button><Button>取消(C)</Button></Actions>
        </Form>
      </Dialog>
      <Cursor width="12" height="18" viewBox="0 0 12 18"><path d="M.5.500v14l3-3 3 6 2.500-1-3-6h5z" fill={paper} stroke={slate} /></Cursor>
    </Page>
  );
}
